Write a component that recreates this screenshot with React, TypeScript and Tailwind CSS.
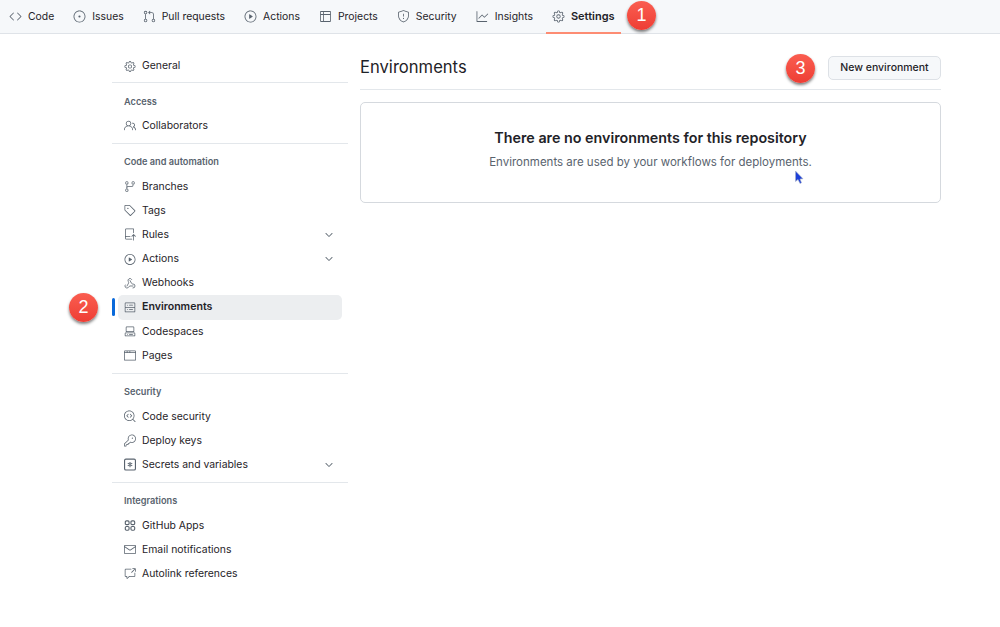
import type { ReactNode } from "react";
import { Webhook } from "lucide-react";
import {
  GoBrowser,
  GoChevronDown,
  GoCode,
  GoCodescan,
  GoCodespaces,
  GoCrossReference,
  GoGear,
  GoGitBranch,
  GoGitPullRequest,
  GoGraph,
  GoIssueOpened,
  GoKey,
  GoMail,
  GoPeople,
  GoPlay,
  GoRepoPush,
  GoServer,
  GoShield,
  GoTable,
  GoTag,
} from "react-icons/go";

const tabs = [
  { label: "Code", icon: <GoCode size={13} /> },
  { label: "Issues", icon: <GoIssueOpened size={13} /> },
  { label: "Pull requests", icon: <GoGitPullRequest size={13} /> },
  { label: "Actions", icon: <GoPlay size={13} /> },
  { label: "Projects", icon: <GoTable size={13} /> },
  { label: "Security", icon: <GoShield size={13} /> },
  { label: "Insights", icon: <GoGraph size={13} /> },
  { label: "Settings", icon: <GoGear size={13} />, active: true },
];

function AppsIcon() {
  return (
    <svg width="13" height="13" viewBox="0 0 16 16" fill="none" stroke="currentColor" strokeWidth="1.5">
      <rect x="1.75" y="1.75" width="5" height="5" rx="1.5" />
      <rect x="9.25" y="1.75" width="5" height="5" rx="1.5" />
      <rect x="1.75" y="9.25" width="5" height="5" rx="1.5" />
      <rect x="9.25" y="9.25" width="5" height="5" rx="1.5" />
    </svg>
  );
}

function AsteriskIcon() {
  return (
    <svg width="13" height="13" viewBox="0 0 16 16" fill="none" stroke="currentColor" strokeWidth="1.5">
      <rect x="0.75" y="0.75" width="14.5" height="14.5" rx="1.75" />
      <path d="M8 4.5v7M5 6.2l6 3.6M11 6.2l-6 3.6" strokeWidth="1.4" />
    </svg>
  );
}

function Badge({ n, className }: { n: number; className: string }) {
  return (
    <div
      className={`absolute flex h-[29px] w-[29px] items-center justify-center rounded-full bg-linear-to-b from-[#fa5d50] to-[#ee3d34] font-['Liberation_Sans',sans-serif] text-[18px] text-white shadow-[0_2px_3px_rgba(0,0,0,0.5)] ${className}`}
    >
      {n}
    </div>
  );
}

function Row({
  icon,
  label,
  chevron,
  active,
}: {
  icon: ReactNode;
  label: string;
  chevron?: boolean;
  active?: boolean;
}) {
  return (
    <div
      className={`relative mx-[6px] flex h-[24.2px] items-center rounded-[5px] pl-[6px] pr-[7px] text-[#1f2328] ${
        active ? "bg-[#eceef0] text-[10.6px] font-semibold" : "text-[10.4px]"
      }`}
    >
      {active && (
        <span className="absolute left-[-6px] top-[3px] h-[18px] w-[3px] rounded-full bg-[#0969da]" />
      )}
      <span className="flex w-[12px] justify-center text-[#59636e]">{icon}</span>
      <span className="ml-[6px] flex-1">{label}</span>
      {chevron && <GoChevronDown size={12} className="text-[#59636e]" />}
    </div>
  );
}

function Section({ title, children }: { title: string; children: ReactNode }) {
  return (
    <div>
      <div className="border-t border-[#e3e7eb] pl-[12px] pt-[9.5px] pb-[3px] text-[9.2px] font-semibold leading-[18px] text-[#59636e]">
        {title}
      </div>
      <div className="pb-[5px]">{children}</div>
    </div>
  );
}

export default function App() {
  return (
    <div className="relative h-[627px] w-[1000px] overflow-hidden bg-white font-['Inter',sans-serif] text-[#1f2328]">
      <nav className="flex h-[34px] items-stretch gap-[7px] border-b border-[#dfe3e8] bg-[#f6f8fa] pl-[3px]">
        {tabs.map((tab) => (
          <div
            key={tab.label}
            className={`relative flex items-center gap-[6px] px-[6px] ${
              tab.active ? "text-[11px] font-semibold" : "text-[10.4px]"
            }`}
          >
            <span className="text-[#59636e]">{tab.icon}</span>
            {tab.label}
            {tab.active && (
              <span className="absolute inset-x-0 bottom-[-1px] h-[2px] bg-[#fd8c73]" />
            )}
          </div>
        ))}
      </nav>

      <div className="flex gap-[12px] pl-[112px] pt-[20px]">
        <aside className="w-[236px]">
          <div className="pb-[4px]">
            <Row icon={<GoGear size={13} />} label="General" />
          </div>
          <Section title="Access">
            <Row icon={<GoPeople size={13} />} label="Collaborators" />
          </Section>
          <Section title="Code and automation">
            <Row icon={<GoGitBranch size={13} />} label="Branches" />
            <Row icon={<GoTag size={13} />} label="Tags" />
            <Row icon={<GoRepoPush size={13} />} label="Rules" chevron />
            <Row icon={<GoPlay size={13} />} label="Actions" chevron />
            <Row icon={<Webhook size={13} strokeWidth={1.6} />} label="Webhooks" />
            <Row icon={<GoServer size={13} />} label="Environments" active />
            <Row icon={<GoCodespaces size={13} />} label="Codespaces" />
            <Row icon={<GoBrowser size={13} />} label="Pages" />
          </Section>
          <Section title="Security">
            <Row icon={<GoCodescan size={13} />} label="Code security" />
            <Row icon={<GoKey size={13} />} label="Deploy keys" />
            <Row icon={<AsteriskIcon />} label="Secrets and variables" chevron />
          </Section>
          <Section title="Integrations">
            <Row icon={<AppsIcon />} label="GitHub Apps" />
            <Row icon={<GoMail size={13} />} label="Email notifications" />
            <Row icon={<GoCrossReference size={13} />} label="Autolink references" />
          </Section>
        </aside>

        <main className="mt-[-1px] w-[581px]">
          <div className="flex h-[37px] items-start justify-between border-b border-[#e3e7eb] pt-[3px]">
            <h1 className="mt-[-1px] text-[16.6px] font-normal leading-[24px] text-[#1f2328]">Environments</h1>
            <button className="h-[24px] w-[113px] rounded-[5px] border border-[#dde1e6] bg-[#f6f8fa] text-[10.5px] font-medium text-[#1f2328]">
              New environment
            </button>
          </div>
          <div className="mt-[12px] flex h-[101px] flex-col items-center rounded-[5px] border border-[#d5d9de] pt-[25px]">
            <h2 className="text-[14.3px] font-semibold leading-[20px] text-[#1f2328]">
              There are no environments for this repository
            </h2>
            <p className="mt-[5px] text-[11.5px] leading-[18px] text-[#59636e]">
              Environments are used by your workflows for deployments.
            </p>
          </div>
        </main>
      </div>

      <Badge n={1} className="left-[627px] top-[1px]" />
      <Badge n={2} className="left-[69px] top-[293px]" />
      <Badge n={3} className="left-[786px] top-[54px]" />

      <svg
        className="absolute left-[794px] top-[170px]"
        width="10"
        height="15"
        viewBox="0 0 10 15"
      >
        <path d="M1.5 1 L1.5 11.5 L4 9.5 L6 13.5 L7.5 12.8 L6 9 L9 8.8 Z" fill="#1d3fd8" stroke="#a9b4c6" strokeWidth="0.6" />
      </svg>
    </div>
  );
}
